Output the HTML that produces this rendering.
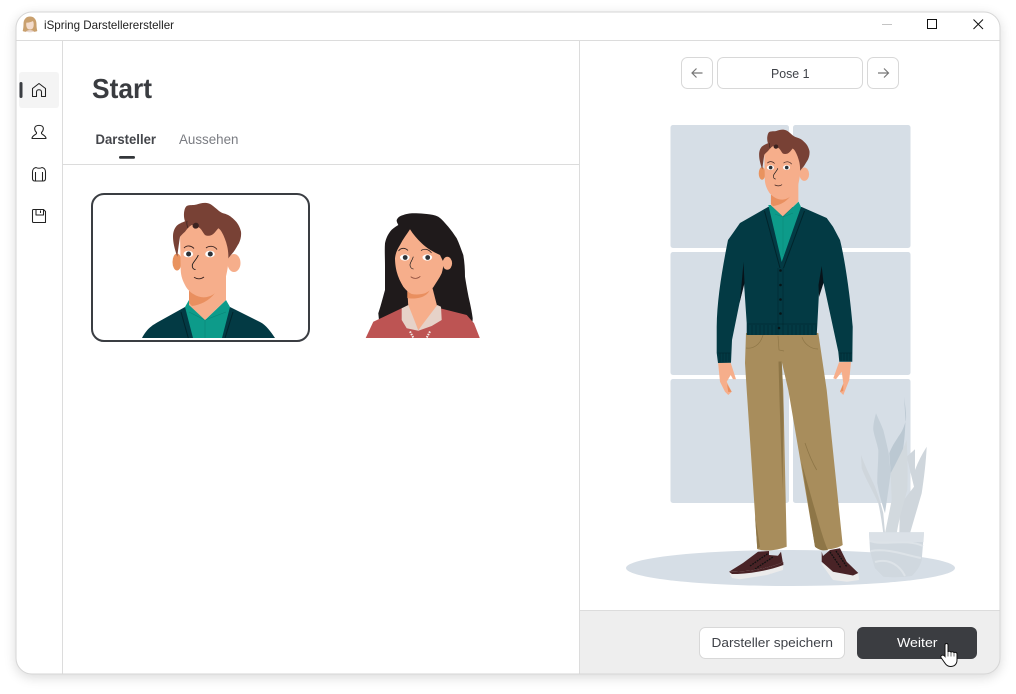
<!DOCTYPE html>
<html>
<head>
<meta charset="utf-8">
<style>
html,body{margin:0;padding:0;width:1016px;height:694px;background:#fff;overflow:hidden}
svg{position:absolute;left:0;top:0}
text{font-family:"Liberation Sans",sans-serif}
#win{position:absolute;left:16px;top:12px;width:984px;height:662px;border-radius:16px;box-shadow:0 3px 12px rgba(0,0,0,.16)}
</style>
</head>
<body>
<div id="win"></div>
<svg width="1016" height="694" viewBox="0 0 1016 694" xmlns="http://www.w3.org/2000/svg">
<defs>
<clipPath id="w"><rect x="16" y="12" width="984" height="662" rx="16"/></clipPath>
<clipPath id="c1"><rect x="93" y="195" width="215" height="143"/></clipPath>
<g id="head">
  <path d="M189 285V305L205 320L226 300V275Z" fill="#f6ae8b"/>
  <path d="M189 291V303L192 306C200 305 209 301 215 293Z" fill="#e98f5f"/>
  <ellipse cx="177" cy="262" rx="4.500" ry="8.500" fill="#e9935f"/>
  <ellipse cx="234" cy="263" rx="6.500" ry="9" fill="#f6ae8b"/>
  <path d="M180 232L180.700 270C181 277 183 281 185 285C187 289 190 292 193.300 294C197 296.500 201 297.500 205 297.300C209 297 212 295.500 215 293.300C219 289 223 285 225 280C227 273 228.500 265 228.500 258L228 240L215 222L190 222Z" fill="#f6ae8b"/>
  <path d="M184 213C184.500 209.500 185 207.500 186.700 206C190 204.500 193 205.500 196.700 204.500C200 203.500 203 202.500 206.700 203C210.500 203.500 212.500 205.500 215.500 208C218.500 210.500 220.500 212.500 224 213.500C228 214.500 231 216.500 234 219.500C237.500 222.500 240 227 241 231.700C241.500 236 240.500 240 238.800 243.500C236.500 247 235.500 249.500 233.500 252C231.500 254.500 229.500 256.500 228.300 258.500C228.500 254 228 250 227.300 246.700C226 241 224 236 221.700 232C220.500 230 219.500 229 218.300 228.300C216 231 214 234 211.700 235C209 236 207 236 205 235C203 233 202 230 200 228.300C198 226.500 195 225 191.700 225C189 226.500 187 229 185 231.700C183 233.500 181.500 235 180 236.700C179 243 178 250 177.300 256.700C175 250 173 243 173 236.700C173 231.500 174.500 228.500 176.500 226C179 223.500 182 222.500 185 221.200C184 218.500 183.800 215.500 184 213Z" fill="#784135"/>
  <path d="M192.500 226C193 223 196 222 198 223.500C199.500 225 199 228 196.500 228.500C194.500 229 193 228 192.500 226Z" fill="#3b2320"/>
  <path d="M187 221C186.500 224 187 226 188 228" fill="none" stroke="#3b2320" stroke-width=".8"/>
  <path d="M184 248C187 245 191 245.500 194 248.500M206 248C209 245.500 214 245.500 217 249.500" fill="none" stroke="#3b2320" stroke-width=".9"/>
  <ellipse cx="188.300" cy="254" rx="4.800" ry="3.300" fill="#fff"/>
  <ellipse cx="210" cy="254" rx="4.800" ry="3.300" fill="#fff"/>
  <circle cx="188.600" cy="254" r="2.500" fill="#2c3238"/>
  <circle cx="210.300" cy="254" r="2.500" fill="#2c3238"/>
  <path d="M198.300 255C197 259 193 262 192.300 265C192 268 193.500 269.500 195.500 269.500" fill="none" stroke="#1c1c1c" stroke-width=".9"/>
  <path d="M194 277.300C197 279.300 201 279.300 204 277" fill="none" stroke="#3b2320" stroke-width=".9"/>
</g>
</defs>

<g clip-path="url(#w)">
  <rect x="16" y="12" width="984" height="662" fill="#fff"/>
  <rect x="580" y="611" width="420" height="63" fill="#eeeeee"/>
  <path d="M16 40.500H1000M62.500 41V674M579.500 41V674M63 164.500H579M580 610.500H1000" stroke="#dcdcdc" stroke-width="1" fill="none"/>
</g>
<rect x="16" y="12" width="984" height="662" rx="16" fill="none" stroke="#d6d6d6"/>

<!-- title bar -->
<g>
  <path d="M30 16.500C26 16.500 23.500 19.500 23.500 24C23.500 27 23.200 29 22.700 31C25 32.500 35 32.500 37.300 31C36.800 29 36.500 27 36.500 24C36.500 19.500 34 16.500 30 16.500Z" fill="#c9a06e"/>
  <path d="M26.500 22.500C28 23 31 22 33 21C34 23 34 26 33 28C32 30 28 30 27 28C26 26 26 24 26.500 22.500Z" fill="#f3dccd"/>
  <path d="M25.500 32C27 29.500 33 29.500 34.500 32Z" fill="#e9d8d0"/>
</g>
<text x="44" y="29" font-size="12" fill="#222" textLength="130" lengthAdjust="spacingAndGlyphs">iSpring Darstellerersteller</text>
<path d="M882 24.500H892" stroke="#c4c4c4"/>
<rect x="927.500" y="19.500" width="9" height="9" fill="none" stroke="#111" stroke-width="1"/>
<path d="M973.500 19.500L983 29M983 19.500L973.500 29" stroke="#111" stroke-width="1" fill="none"/>

<!-- sidebar -->
<rect x="19" y="72" width="40" height="36" rx="3" fill="#f4f4f4"/>
<rect x="19.500" y="82" width="3" height="16" rx="1.500" fill="#3a3d42"/>
<g fill="none" stroke="#222" stroke-width="1.050" stroke-linejoin="round">
  <path d="M32.500 96.500V88.500L39 83.500L45.500 88.500V96.500H41.500V92C41.500 89 36.500 89 36.500 92V96.500Z"/>
  <path d="M32 138.500H46C46 135.500 42.500 135 41.500 133.500V132.500C43 131 43.500 129.500 43.300 128C42.500 124.500 35.500 124.500 34.700 128C34.500 129.500 35 131 36.500 132.500V133.500C35.500 135 32 135.500 32 138.500Z"/>
  <path d="M36 167.500C33.500 168 32.500 170 32.500 172V178.500C32.500 180 33.500 181 35 181H43C44.500 181 45.500 180 45.500 178.500V172C45.500 170 44.500 168 42 167.500C40.500 168.500 37.500 168.500 36 167.500ZM35.500 172V181M42.500 172V181"/>
  <path d="M33.500 209.500H43.500L45.500 211.500V222.500H33.500C33 222.500 32.500 222 32.500 221.500V210.500C32.500 210 33 209.500 33.500 209.500ZM36 209.500V215H43.500V210M40.500 210.500V213"/>
</g>

<!-- heading -->
<text x="92" y="98" font-size="27.500" font-weight="bold" fill="#3a3c40" textLength="60" lengthAdjust="spacingAndGlyphs">Start</text>
<text x="95.500" y="144" font-size="13.500" font-weight="bold" fill="#44464b" textLength="60.500" lengthAdjust="spacingAndGlyphs">Darsteller</text>
<text x="179" y="144" font-size="13.500" fill="#7a7c82" textLength="59.500" lengthAdjust="spacingAndGlyphs">Aussehen</text>
<rect x="119" y="156" width="16" height="2.800" rx="1.400" fill="#33363a"/>

<!-- selected card -->
<rect x="92" y="194" width="217" height="147" rx="12" fill="#fff" stroke="#3a3d42" stroke-width="2"/>
<g clip-path="url(#c1)">
  <path d="M142 338C147 329 151 326 158 322L185 307L205 320L230 307L260 322C266 325 271 332 275 338Z" fill="#033a44"/>
  <path d="M185 307L189 300L205 320L226 300L230 307L222 338H193Z" fill="#0d9b8a"/>
  <path d="M205 320V338M189 312L205 320L226 312" stroke="#0a8577" stroke-width=".6" fill="none"/>
  <path d="M181 312L188.300 338M233 312L225 338" stroke="#01242b" stroke-width="1" fill="none"/>
  <use href="#head"/>
</g>

<!-- woman -->
<g>
  <path d="M396.700 220C398 217 400 216 403.300 215C406 214 410 213.300 413.300 213.300C418 213 422 213.500 426.700 214C431 214.500 435 215 438.300 216.700C442 219 445 223 448.300 226.700C451 230 454 234 456.700 238.300C459 243 461 249 463.300 255C464.500 262 465 269 465 276.700C466.500 286 468 295 470 303.300C471 308 472 313 472.700 318.300L472 330H380L378.300 313.300C381 305 383 297 385 290C385 282 385 275 385 266.700C385 258 384.500 250 385 243.300C386 238 388 234.500 390 231.700C392 229 395 227 398.300 225C397.500 223 396.500 222 396.700 220Z" fill="#1f1a1b"/>
  <path d="M365.700 338L373.300 321.700L401.700 308.300H440L466.700 315L474 323.300L479.800 338Z" fill="#bd5453"/>
  <path d="M407.300 290L408.300 306.700L418.300 330L437.300 306.700L431.700 285Z" fill="#f6ae8b"/>
  <path d="M407.300 292V298C412 299 420 298.500 424 296C427 294.500 429 292 430.500 289Z" fill="#e98f5f"/>
  <ellipse cx="447.300" cy="263.300" rx="4.800" ry="6.500" fill="#f6ae8b"/>
  <path d="M410 229.300C407 234 403 239 400 245C397.500 249 395.500 253 395 258.300C395 262 395.500 267 396.700 271.700C398 277 400.500 282 403.300 286.700C406 290 408.500 292.500 411.700 294C416 295 421 294.500 425 293.300C428 292 431 290 433.300 287.300C436 283 439.500 278 441.700 273.300C443 269 443.500 265 443.300 261.700L440 255C433 252 426.500 248 421.700 243.300C417 239 413 234 410 229.300Z" fill="#f6ae8b"/>
  <path d="M401.700 308.300L408.300 305L418.300 330L437.300 305L441 306.700L441.700 320L431.700 326L418.300 330.700L406.700 328.300L401.700 320Z" fill="#e6d2c8"/>
  <path d="M410 331.500L413.500 338M430 331.500L426.500 338" stroke="#f5ece8" stroke-width="2" stroke-dasharray="1.600 1" fill="none"/>
  <path d="M398.500 251C401 247.500 405 247.500 408 250.500M421 250.500C425 248 429 249.500 431.500 253" fill="none" stroke="#2a2020" stroke-width=".8"/>
  <ellipse cx="404.800" cy="257.500" rx="4.800" ry="3.100" fill="#fff"/>
  <ellipse cx="427.300" cy="257.500" rx="4.800" ry="3.100" fill="#fff"/>
  <circle cx="405.200" cy="257.500" r="2.400" fill="#2c3238"/>
  <circle cx="427.700" cy="257.500" r="2.400" fill="#2c3238"/>
  <path d="M413.300 256.700C412.500 260 410 262.500 410 265C410 267.500 412 269 413.500 269" fill="none" stroke="#1c1c1c" stroke-width=".7"/>
  <path d="M410.700 276.700C413.500 279 417.500 279 420.300 276.300" fill="none" stroke="#8a4a3a" stroke-width=".8"/>
</g>

<!-- pose controls -->
<g fill="#fff" stroke="#d8d8d8">
  <rect x="681.500" y="57.500" width="31" height="31" rx="6"/>
  <rect x="717.500" y="57.500" width="145" height="31" rx="6"/>
  <rect x="867.500" y="57.500" width="31" height="31" rx="6"/>
</g>
<path d="M702.500 73H692M696.500 68.500L692 73L696.500 77.500M878 73H888.500M884 68.500L888.500 73L884 77.500" fill="none" stroke="#777" stroke-width="1.200"/>
<text x="771" y="78" font-size="13" fill="#3f4248" textLength="38.500" lengthAdjust="spacingAndGlyphs">Pose 1</text>

<!-- background panels -->
<g fill="#d6dee6">
  <rect x="670.500" y="125" width="118.500" height="123" rx="2.500"/>
  <rect x="793" y="125" width="117.500" height="123" rx="2.500"/>
  <rect x="670.500" y="252" width="118.500" height="123" rx="2.500"/>
  <rect x="793" y="252" width="117.500" height="123" rx="2.500"/>
  <rect x="670.500" y="379" width="118.500" height="124" rx="2.500"/>
  <rect x="793" y="379" width="117.500" height="124" rx="2.500"/>
  <ellipse cx="790.500" cy="568" rx="164.500" ry="18"/>
</g>

<!-- plant -->
<g>
  <path d="M904 396.700C905 405 906.500 412 906 420C904 427 902 432 898.300 436.700C895 442 891.500 447 889.300 453.300L890.700 473.300L901.700 456.700C904 445 905 435 905.500 420Z" fill="#bbc8d2"/>
  <path d="M876 413.300C874.500 419 873 425 873.300 430C874.500 437 877 443 878.300 450C878.500 462 877 473 877.300 483.300C879 494 882 504 885 513.300L890.700 473.300L888.700 453.300C887 445 885 437 883.300 430C881 424 878 418 876 413.300Z" fill="#c4cfd8"/>
  <path d="M861 455L861.700 468.300C866 480 873 491 878.300 503.300C880.500 513 882 523 883.300 533.300H885L883.300 513.300C881 504 878 495 875 486.700C870 476 865 466 861 455Z" fill="#cfd6dc"/>
  <path d="M915 449.300L906.700 456.700L914 486.700L900 505L899.300 533.300H910L921.700 493.300C924 478 926 462 926.700 446.700C922 454 918 462 915 470Z" fill="#cfd6dc"/>
  <path d="M906.700 440C902 452 896 463 890.700 473.300L891.700 500L885 533.300H896.700C899 519 903 505 907.300 490C908 473 907.500 456 906.700 440Z" fill="#d2d9de"/>
  <path d="M869 532.300H924L921.700 560C920 567 916 572 911.700 576C902 577.500 892 577.500 883.300 576.700L875 568.300C873 562 871 556 870 550Z" fill="#d0d8df"/>
  <path d="M869 532.300H924L923.500 542H869.500Z" fill="#dbe1e7"/>
  <path d="M870 541C885 546 905 538 923 546M871 551C888 548 905 555 921 558M875 562C890 558 900 566 905 576" stroke="#dde3e8" stroke-width="2" fill="none"/>
</g>

<!-- man figure -->
<g>
  <!-- left shoe -->
  <path d="M729 571.700L743 563L758 551.700L769 551L769 555L778 555.700L781 551.700L783.300 565L770 574L735 575Z" fill="#492326"/>
  <path d="M729 571.700C745 572 768 569 783.300 562L783 570L767 575L740 579.300L732 578Z" fill="#ebebeb"/>
  <path d="M729 571.700C745 572 768 569 783.300 562L783.300 565C768 571 745 574.500 732 574Z" fill="#492326"/>
  <path d="M750 566L768 553.500M755 569L773 557" stroke="#111" stroke-width="1.300" stroke-dasharray="1.800 1" fill="none"/>
  <!-- right shoe -->
  <path d="M821 563.300L833 580L847 581.700L859 580L858.300 573L835 566Z" fill="#ebebeb"/>
  <path d="M821.700 551.700L823 556L830 550L840 548.300L846.700 561.700L858.300 573L853 575.500L833 571.700L821.700 561.700Z" fill="#492326"/>
  <path d="M830 552L841 568M836 551L847 567" stroke="#111" stroke-width="1.300" stroke-dasharray="1.800 1" fill="none"/>
  <!-- pants -->
  <path d="M746 333L745 363L746.700 390L757.300 549C765 552 778 550 786.700 546.700L783.300 390L781.700 361.500L788.300 390L815 546.700C820 551 835 550 842.700 545L826.700 390L818.300 333Z" fill="#a88d5c"/>
  <path d="M778.500 361.500H781.700L783.500 415L782.500 490L779.500 400Z" fill="#8e7647"/>
  <path d="M801.700 463L815 546.700C820 551 824 550.500 828 550C823 540 815 510 801.700 463Z" fill="#8e7647"/>
  <path d="M805 443C808 452 812 462 816.700 470" stroke="#8e7647" stroke-width=".8" fill="none"/>
  <path d="M755 516L757.300 549L760 547Z" fill="#8e7647"/>
  <path d="M746 348C752 349 760 346 763 335M778 336L779 350L784 351M802 337C804 344 811 349 818 349" fill="none" stroke="#8e7647" stroke-width=".7"/>
  <!-- hands -->
  <path d="M718 362L730.700 362.700L736 379.300L733 379.300L730.700 375L726.700 381.700L731.700 391.700L728.300 395L725 391.700L720 381.700Z" fill="#f6ae8b"/>
  <path d="M839 362.300L851 361.700L849.300 380L843.300 395L840 391.700L843.300 383.300L841.700 371.700L836 379.300L833.300 378.300Z" fill="#f6ae8b"/>
  <path d="M727 384L731.700 391.700L728.300 392ZM843.300 384L840 391.700L843.300 391Z" fill="#e98f5f"/>
  <!-- cardigan -->
  <path d="M768 207L740 223L733 233L728 240C722 270 717 300 716.700 326.700V353L718 363L731 362.700L732 340L739.500 303L744 283L746.700 323V335L816.700 335L817.300 325L819.500 283L823.500 283L838.300 351.700L839.300 361.700L852.300 361.700L852.700 326.700C850 295 845 260 840 240L833 226.700L826.700 218L801.700 207Z" fill="#033a44"/>
  <path d="M743.500 262L744.500 283L739.500 303L741.500 285Z" fill="#07131a"/>
  <path d="M821.700 266L823.500 283L819 297L818.500 285Z" fill="#07131a"/>
  <path d="M768.300 205L771 205L783 216.500L798.500 201.600L801 207L781.700 262Z" fill="#0d9b8a"/>
  <path d="M783 217V255M775 214L783 217L793 213" stroke="#0a8577" stroke-width=".5" fill="none"/>
  <path d="M764.500 211L780 268M804.500 211L783.500 268" stroke="#01242b" stroke-width="1" fill="none"/>
  <path d="M778 268V335M783 268V335" stroke="#01242b" stroke-width=".5" fill="none"/>
  <g fill="#071416"><circle cx="780.500" cy="270.500" r="1.300"/><circle cx="780.500" cy="285" r="1.300"/><circle cx="780.500" cy="299.500" r="1.300"/><circle cx="780.500" cy="313.500" r="1.300"/><circle cx="779" cy="328" r="1.300"/></g>
  <path d="M747 324H817M718 353H730.500M839 353H852" stroke="#01242b" stroke-width=".5" fill="none"/>
  <path d="M748 325V335M752 325V335M756 325V335M760 325V335M764 325V335M768 325V335M772 325V335M776 325V335M788 325V335M792 325V335M796 325V335M800 325V335M804 325V335M808 325V335M812 325V335M816 325V335M720 353V362M723 353V362M726 353V362M729 353V362M841 353V361M844 353V361M847 353V361M850 353V361" stroke="#022a32" stroke-width=".7" fill="none"/>
  <use href="#head" transform="translate(630.960 -20.590) scale(.7407)"/>
</g>

<!-- footer buttons -->
<rect x="699.500" y="627.500" width="145" height="31" rx="6" fill="#fff" stroke="#d8d8d8"/>
<text x="711.500" y="647" font-size="13" fill="#3f4248" textLength="121.500" lengthAdjust="spacingAndGlyphs">Darsteller speichern</text>
<rect x="857" y="627" width="120" height="32" rx="6" fill="#3b3d41"/>
<text x="897" y="647" font-size="13" fill="#fff" textLength="40.500" lengthAdjust="spacingAndGlyphs">Weiter</text>
<!-- cursor -->
<path d="M945 645C945 643 948 643 948 645V652C948 651 951 651 951 652.500C951 651.500 954 651.500 954 653C954 652 957 652 957 654V660C957 664 954.500 666.500 950.500 666.500C947.500 666.500 946 665 944.500 662.500L941 657.500C940 655.500 943 654 945 656.500Z" fill="#fff" stroke="#111" stroke-width="1"/>
<path d="M948 652V656.500M951 652.500V656.500M954 653V656.500" stroke="#111" stroke-width=".6"/>
</svg>
</body>
</html>
